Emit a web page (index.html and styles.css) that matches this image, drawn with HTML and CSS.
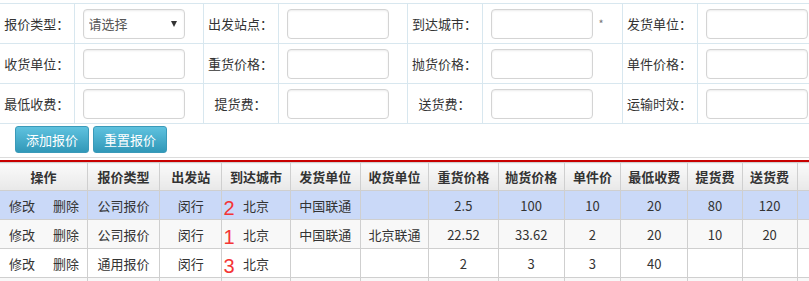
FILE: index.html
```html
<!DOCTYPE html>
<html lang="zh-CN">
<head>
    <meta charset="UTF-8">
    <title>报价管理</title>
    <link rel="stylesheet" href="styles.css">
</head>
<body>
    <table class="query">
        <colgroup>
            <col style="width:74px"><col style="width:129px">
            <col style="width:75px"><col style="width:129px">
            <col style="width:75px"><col style="width:140px">
            <col style="width:75px"><col style="width:133px">
        </colgroup>
        <tr>
            <td class="lbl">报价类型：</td>
            <td class="fld">
                <span class="sel-wrap">
                    <select class="sel">
                        <option>请选择</option>
                        <option>公司报价</option>
                        <option>通用报价</option>
                    </select>
                </span>
            </td>
            <td class="lbl">出发站点：</td>
            <td class="fld"><input type="text"></td>
            <td class="lbl">到达城市：</td>
            <td class="fld"><input type="text"><span class="req">*</span></td>
            <td class="lbl">发货单位：</td>
            <td class="fld"><input type="text"></td>
        </tr>
        <tr>
            <td class="lbl">收货单位：</td>
            <td class="fld"><input type="text"></td>
            <td class="lbl">重货价格：</td>
            <td class="fld"><input type="text"></td>
            <td class="lbl">抛货价格：</td>
            <td class="fld"><input type="text"></td>
            <td class="lbl">单件价格：</td>
            <td class="fld"><input type="text"></td>
        </tr>
        <tr>
            <td class="lbl">最低收费：</td>
            <td class="fld"><input type="text"></td>
            <td class="lbl">提货费：</td>
            <td class="fld"><input type="text"></td>
            <td class="lbl">送货费：</td>
            <td class="fld"><input type="text"></td>
            <td class="lbl">运输时效：</td>
            <td class="fld"><input type="text"></td>
        </tr>
    </table>

    <div class="actions">
        <button class="btn">添加报价</button>
        <button class="btn">重置报价</button>
    </div>
    <div class="rule"></div>

    <table class="grid">
        <colgroup>
            <col style="width:87px"><col style="width:72px"><col style="width:62px">
            <col style="width:68px"><col style="width:70px"><col style="width:68px">
            <col style="width:69px"><col style="width:66px"><col style="width:56px">
            <col style="width:67px"><col style="width:54px"><col style="width:55px">
            <col style="width:46px">
        </colgroup>
        <thead>
            <tr>
                <th>操作</th><th>报价类型</th><th>出发站</th><th>到达城市</th>
                <th>发货单位</th><th>收货单位</th><th>重货价格</th><th>抛货价格</th>
                <th>单件价</th><th>最低收费</th><th>提货费</th><th>送货费</th><th></th>
            </tr>
        </thead>
        <tbody>
            <tr class="active">
                <td><a class="op">修改</a><a class="op">删除</a></td>
                <td>公司报价</td><td>闵行</td>
                <td class="city"><span class="mark">2</span>北京</td>
                <td>中国联通</td><td></td><td>2.5</td><td>100</td>
                <td>10</td><td>20</td><td>80</td><td>120</td><td></td>
            </tr>
            <tr class="alt">
                <td><a class="op">修改</a><a class="op">删除</a></td>
                <td>公司报价</td><td>闵行</td>
                <td class="city"><span class="mark">1</span>北京</td>
                <td>中国联通</td><td>北京联通</td><td>22.52</td><td>33.62</td>
                <td>2</td><td>20</td><td>10</td><td>20</td><td></td>
            </tr>
            <tr>
                <td><a class="op">修改</a><a class="op">删除</a></td>
                <td>通用报价</td><td>闵行</td>
                <td class="city"><span class="mark">3</span>北京</td>
                <td></td><td></td><td>2</td><td>3</td>
                <td>3</td><td>40</td><td></td><td></td><td></td>
            </tr>
            <tr class="alt">
                <td></td><td></td><td></td><td></td><td></td><td></td><td></td>
                <td></td><td></td><td></td><td></td><td></td><td></td>
            </tr>
        </tbody>
    </table>
</body>
</html>
```
FILE: styles.css
```css
html, body {
    margin: 0;
    padding: 0;
    overflow: hidden;
}
body {
    font-family: "Noto Sans CJK SC", sans-serif;
    font-size: 13px;
    color: #333;
    background: #fff;
    text-spacing-trim: space-all;
}

/* query form */
.query {
    border-collapse: collapse;
    table-layout: fixed;
    width: 830px;
    margin-top: 3px;
}
.query td {
    border: 1px solid #d8e7ef;
    height: 39px;
    padding: 0;
}
.query tr td:first-child {
    border-left: none;
}
.query .lbl {
    text-align: center;
    white-space: nowrap;
}
.query .fld {
    padding-left: 8px;
    white-space: nowrap;
}
.query input,
.query .sel {
    box-sizing: border-box;
    width: 102px;
    height: 30px;
    border: 1px solid #d4d4d4;
    border-radius: 4px;
    box-shadow: inset 0 1px 2px rgba(0, 0, 0, 0.08);
    background: #fff;
    vertical-align: middle;
    font-family: inherit;
    font-size: 13px;
    outline: none;
}
.sel-wrap {
    position: relative;
    display: inline-block;
    vertical-align: middle;
}
.query .sel {
    appearance: none;
    -webkit-appearance: none;
    padding: 0 0 0 5px;
    color: #555;
}
.sel-wrap::after {
    content: "";
    position: absolute;
    right: 8px;
    top: 12px;
    border-left: 3.5px solid transparent;
    border-right: 3.5px solid transparent;
    border-top: 6px solid #333;
    pointer-events: none;
}
.req {
    display: inline-block;
    vertical-align: top;
    margin: 6px 0 0 6px;
    font-size: 11px;
    color: #777;
}

/* buttons */
.actions {
    padding: 2px 15px 0;
    height: 31px;
    display: flex;
    gap: 4px;
}
.btn {
    box-sizing: border-box;
    width: 74px;
    height: 27px;
    padding: 0;
    border: 1px solid #3a9ab9;
    border-radius: 3px;
    background: linear-gradient(#5fc2df, #3198b8);
    color: #fff;
    font-family: inherit;
    font-size: 13px;
    cursor: pointer;
}
.btn:hover {
    background: linear-gradient(#4fb3d1, #2887a5);
}
.rule {
    border-top: 1px solid #dcdcdc;
    border-bottom: 2px solid #c80000;
    height: 2px;
}

/* list */
.grid {
    border-collapse: collapse;
    table-layout: fixed;
    width: 844px;
}
.grid th,
.grid td {
    border: 1px solid #cfcfcf;
    text-align: center;
    padding: 0;
    white-space: nowrap;
    overflow: hidden;
}
.grid tr th:first-child,
.grid tr td:first-child {
    border-left: none;
}
.grid th {
    height: 27px;
    background: linear-gradient(#fafafa, #e8e8e8);
    font-weight: bold;
    color: #333;
}
.grid td {
    height: 28px;
    background: #fff;
}
.grid tr.alt td {
    background: #f8f8f8;
}
.grid tr.active td {
    background: #cad9f8;
}
.op {
    color: #333;
    cursor: pointer;
    margin: 0 9px;
}
.grid td.city {
    position: relative;
    overflow: visible;
}
.mark {
    position: absolute;
    left: 1px;
    top: 5px;
    font-family: "Liberation Sans", sans-serif;
    font-size: 20px;
    line-height: 24px;
    color: #f43535;
}
```
